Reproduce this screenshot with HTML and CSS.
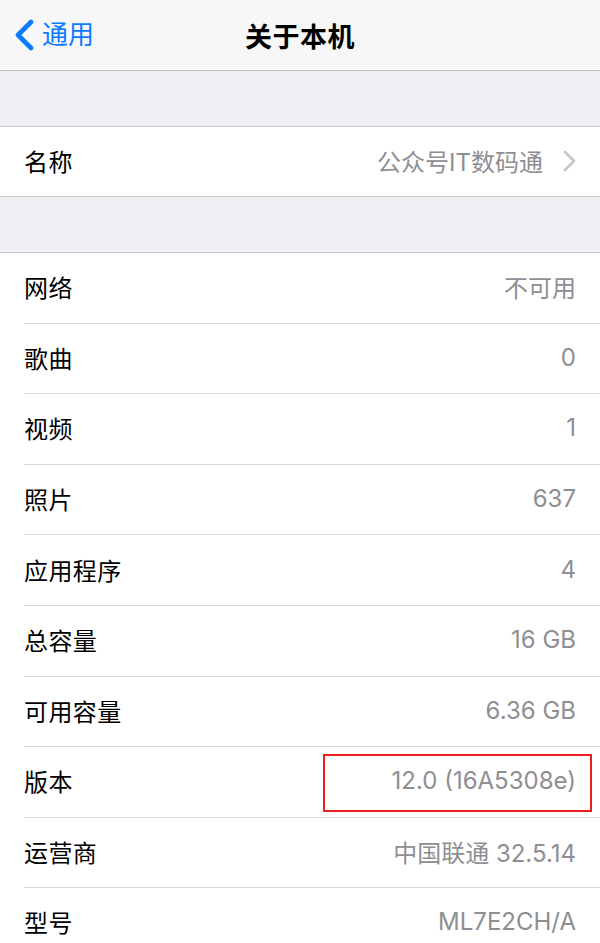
FILE: index.html
```html
<!DOCTYPE html>
<html lang="zh-CN">
<head>
<meta charset="UTF-8">
<meta name="viewport" content="width=device-width, initial-scale=1.0">
<title>关于本机</title>
<link rel="stylesheet" href="styles.css">
</head>
<body>

<header class="navbar">
	<a class="back" href="#">
		<svg class="back-icon" viewBox="0 0 20 32" width="20" height="32"><path d="M17 3 L4 16 L17 29" /></svg>
		<span>通用</span>
	</a>
	<h1 class="title">关于本机</h1>
</header>

<main class="settings">
	<div class="gap"></div>
	<ul class="group">
		<li class="cell">
			<div class="cell-body">
				<span class="label">名称</span>
				<span class="value">公众号IT数码通</span>
				<svg class="chevron" viewBox="0 0 14 22" width="14" height="22"><path d="M2 2 L11 11 L2 20" /></svg>
			</div>
		</li>
	</ul>

	<div class="gap"></div>
	<ul class="group">
		<li class="cell"><div class="cell-body"><span class="label">网络</span><span class="value">不可用</span></div></li>
		<li class="cell"><div class="cell-body"><span class="label">歌曲</span><span class="value">0</span></div></li>
		<li class="cell"><div class="cell-body"><span class="label">视频</span><span class="value">1</span></div></li>
		<li class="cell"><div class="cell-body"><span class="label">照片</span><span class="value">637</span></div></li>
		<li class="cell"><div class="cell-body"><span class="label">应用程序</span><span class="value">4</span></div></li>
		<li class="cell"><div class="cell-body"><span class="label">总容量</span><span class="value">16 GB</span></div></li>
		<li class="cell"><div class="cell-body"><span class="label">可用容量</span><span class="value">6.36 GB</span></div></li>
		<li class="cell marked">
			<div class="cell-body"><span class="label">版本</span><span class="value">12.0 (16A5308e)</span></div>
			<span class="mark-box"></span>
		</li>
		<li class="cell"><div class="cell-body"><span class="label">运营商</span><span class="value">中国联通 32.5.14</span></div></li>
		<li class="cell"><div class="cell-body"><span class="label">型号</span><span class="value">ML7E2CH/A</span></div></li>
	</ul>
</main>

</body>
</html>
```

FILE: styles.css
```css
* {box-sizing: border-box;}

html, body {
	margin: 0;
	padding: 0;
	background: #efeff4;}

body {
	width: 600px;
	height: 943px;
	overflow: hidden;
	font-family: "Inter", "Noto Sans CJK SC", sans-serif;
	color: #000;}

/* навбар */
.navbar {
	position: relative;
	height: 71px;
	display: flex;
	align-items: center;
	justify-content: center;
	background: #f7f7f8;
	border-bottom: 1px solid #bdbdc2;}

.back {
	position: absolute;
	left: 14px;
	top: 0;
	height: 70px;
	display: flex;
	align-items: center;
	gap: 8px;
	color: #0a7aff;
	text-decoration: none;
	font-size: 26px;
	line-height: 1;}

.back-icon {
	fill: none;
	stroke: #0a7aff;
	stroke-width: 4.6;
	stroke-linecap: round;
	stroke-linejoin: round;}

.title {
	margin: 0;
	font-size: 27px;
	font-weight: 600;
	letter-spacing: 0.5px;}

/* список */
.settings {display: block;}

.gap {height: 55px;}

.group {
	list-style: none;
	margin: 0;
	padding: 0;
	background: #fff;
	border-top: 1px solid #c8c7cc;
	border-bottom: 1px solid #c8c7cc;}

.cell {
	position: relative;
	padding-left: 24px;}

.cell-body {
	height: 70.6px;
	display: flex;
	align-items: center;
	padding-right: 24px;
	padding-bottom: 2px;
	border-bottom: 1px solid #d9d8dd;
	font-size: 24px;}

.cell:last-child .cell-body {
	border-bottom: none;
	height: 69px;}

.label {flex: 1; letter-spacing: 0.4px;}

.value {color: #8e8e93;}

.chevron {
	margin-left: 20px;
	margin-right: -1px;
	fill: none;
	stroke: #c4c4c9;
	stroke-width: 2.6;
	stroke-linecap: round;
	stroke-linejoin: round;}

/* красная рамка-пометка */
.mark-box {
	position: absolute;
	left: 323px;
	top: 7px;
	width: 269px;
	height: 58px;
	border: 2px solid #e8201e;}
```
